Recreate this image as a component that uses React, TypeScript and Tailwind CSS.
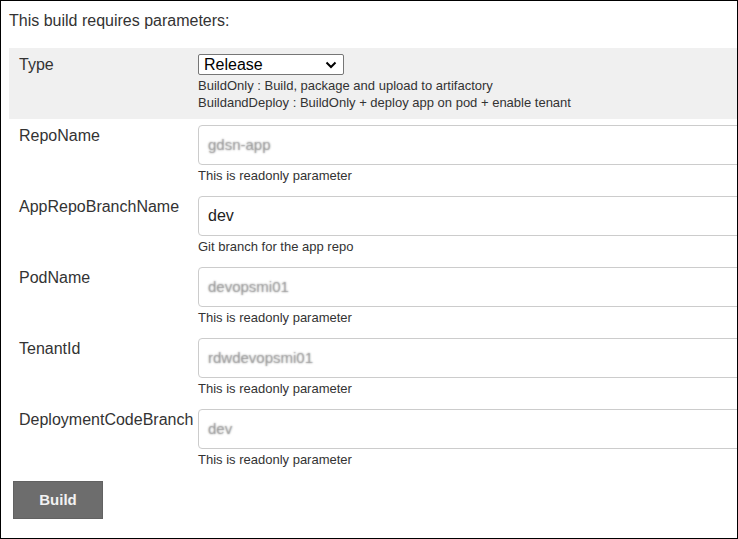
import React from "react";

type Param = {
  name: string;
  value: string;
  blurred: boolean;
  help: string;
};

const params: Param[] = [
  { name: "RepoName", value: "gdsn-app", blurred: true, help: "This is readonly parameter" },
  { name: "AppRepoBranchName", value: "dev", blurred: false, help: "Git branch for the app repo" },
  { name: "PodName", value: "devopsmi01", blurred: true, help: "This is readonly parameter" },
  { name: "TenantId", value: "rdwdevopsmi01", blurred: true, help: "This is readonly parameter" },
  { name: "DeploymentCodeBranch", value: "dev", blurred: true, help: "This is readonly parameter" },
];

const ParamRow = ({ p }: { p: Param }) => (
  <div className="flex pt-[6px] pb-[6px]">
    <div className="w-[189px] shrink-0 pl-[10px] pt-[1px] text-[16px] leading-[20px] text-[#333]">
      {p.name}
    </div>
    <div className="flex flex-col shrink-0">
      <div className="w-[600px] h-[40px] rounded-[4px] border border-[#ccc] bg-white flex items-center pl-[9px]">
        {p.blurred ? (
          <span className="text-[15px] text-[rgba(140,140,140,0.25)] [text-shadow:0_0_2px_#8a8a8a]">
            {p.value}
          </span>
        ) : (
          <span className="text-[16px] text-[#222]">{p.value}</span>
        )}
      </div>
      <div className="mt-[2px] text-[13px] leading-[17px] text-[#333]">{p.help}</div>
    </div>
  </div>
);

export default function App() {
  return (
    <div
      className="w-[738px] h-[539px] border border-black bg-white overflow-hidden pl-[8px] pt-[10px]"
      style={{ fontFamily: '"Liberation Sans", Arial, sans-serif' }}
    >
      <div className="text-[16px] leading-[20px] text-[#333]">This build requires parameters:</div>

      <div className="mt-[17px]">
        <div className="flex bg-[#f0f0f0] pt-[6px] pb-[8px]">
          <div className="w-[189px] shrink-0 pl-[10px] pt-[1px] text-[16px] leading-[20px] text-[#333]">
            Type
          </div>
          <div className="flex flex-col">
            <div className="relative w-[146px] h-[21px] border border-[#767676] rounded-[2px] bg-white flex items-center pl-[5px]">
              <span className="text-[16px] leading-[19px] text-black">Release</span>
              <svg
                className="absolute right-[6px] top-[6px]"
                width="12"
                height="8"
                viewBox="0 0 12 8"
              >
                <path d="M1.5 1.5 L6 6 L10.5 1.5" fill="none" stroke="#000" strokeWidth="2" />
              </svg>
            </div>
            <div className="mt-[2px] text-[13px] leading-[17px] text-[#333]">
              <div>BuildOnly : Build, package and upload to artifactory</div>
              <div>BuildandDeploy : BuildOnly + deploy app on pod + enable tenant</div>
            </div>
          </div>
        </div>

        {params.map((p) => (
          <ParamRow key={p.name} p={p} />
        ))}
      </div>

      <button className="mt-[7px] ml-[4px] w-[90px] h-[38px] bg-[#6d6d6d] border border-[#626262] text-[#f2f2f2] font-bold text-[15px]">
        Build
      </button>
    </div>
  );
}
